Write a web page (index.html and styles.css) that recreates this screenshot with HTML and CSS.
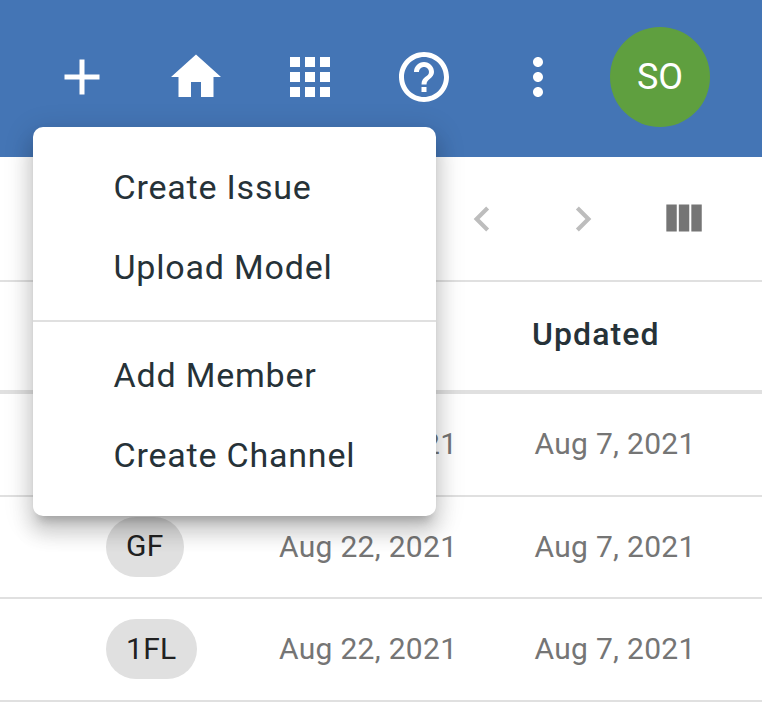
FILE: index.html
```html
<!DOCTYPE html>
<html lang="en">
<head>
<meta charset="utf-8">
<title>Issues</title>
<link rel="stylesheet" href="styles.css">
</head>
<body>
<header class="appbar">
  <button class="icon-btn"><svg class="icon" viewBox="0 0 24 24"><path d="M19 13h-6v6h-2v-6H5v-2h6V5h2v6h6v2z"/></svg></button>
  <button class="icon-btn"><svg class="icon" viewBox="0 0 24 24"><path d="M10 20v-6h4v6h5v-8h3L12 3 2 12h3v8z"/></svg></button>
  <button class="icon-btn"><svg class="icon" viewBox="0 0 24 24"><path d="M4 8h4V4H4v4zm6 12h4v-4h-4v4zm-6 0h4v-4H4v4zm0-6h4v-4H4v4zm6 0h4v-4h-4v4zm6-10v4h4V4h-4zm-6 4h4V4h-4v4zm6 6h4v-4h-4v4zm0 6h4v-4h-4v4z"/></svg></button>
  <button class="icon-btn"><svg class="icon" viewBox="0 0 24 24"><path d="M11 18h2v-2h-2v2zm1-16C6.48 2 2 6.48 2 12s4.48 10 10 10 10-4.48 10-10S17.52 2 12 2zm0 18c-4.41 0-8-3.59-8-8s3.59-8 8-8 8 3.59 8 8-3.59 8-8 8zm0-14c-2.21 0-4 1.79-4 4h2c0-1.1.9-2 2-2s2 .9 2 2c0 2-3 1.75-3 5h2c0-2.25 3-2.5 3-5 0-2.21-1.79-4-4-4z"/></svg></button>
  <button class="icon-btn"><svg class="icon" viewBox="0 0 24 24"><path d="M12 8c1.1 0 2-.9 2-2s-.9-2-2-2-2 .9-2 2 .9 2 2 2zm0 2c-1.1 0-2 .9-2 2s.9 2 2 2 2-.9 2-2-.9-2-2-2zm0 6c-1.1 0-2 .9-2 2s.9 2 2 2 2-.9 2-2-.9-2-2-2z"/></svg></button>
  <div class="avatar">SO</div>
</header>

<main>
  <div class="toolbar">
    <button class="tool-btn"><svg class="tool-icon muted" viewBox="0 0 24 24"><path d="M15.41 7.41L14 6l-6 6 6 6 1.41-1.41L10.83 12z"/></svg></button>
    <button class="tool-btn"><svg class="tool-icon muted" viewBox="0 0 24 24"><path d="M10 6L8.59 7.41 13.17 12l-4.58 4.59L10 18l6-6z"/></svg></button>
    <button class="tool-btn tool-last"><svg class="tool-icon" viewBox="0 0 24 24"><path d="M10 18h5V5h-5v13zm-6 0h5V5H4v13zM16 5v13h5V5h-5z"/></svg></button>
  </div>
  <div class="row head">
    <span></span><span></span><span class="col-updated">Updated</span>
  </div>
  <div class="row">
    <span class="chip">GF</span><span class="date">Aug 22, 2021</span><span class="date">Aug 7, 2021</span>
  </div>
  <div class="row">
    <span class="chip">GF</span><span class="date">Aug 22, 2021</span><span class="date">Aug 7, 2021</span>
  </div>
  <div class="row">
    <span class="chip">1FL</span><span class="date">Aug 22, 2021</span><span class="date">Aug 7, 2021</span>
  </div>
</main>

<nav class="menu">
  <ul class="menu-group">
    <li class="menu-item">Create Issue</li>
    <li class="menu-item">Upload Model</li>
  </ul>
  <ul class="menu-group divided">
    <li class="menu-item">Add Member</li>
    <li class="menu-item">Create Channel</li>
  </ul>
</nav>
</body>
</html>
```
FILE: styles.css
```css
* { box-sizing: border-box; }
html, body { margin: 0; height: 100%; }
body {
  position: relative;
  overflow: hidden;
  background: #fff;
  font-family: Roboto, "Liberation Sans", sans-serif;
  color: #212121;
}
button {
  border: 0;
  padding: 0;
  background: none;
  display: flex;
  align-items: center;
  justify-content: center;
}
.appbar {
  height: 157px;
  background: #4475b5;
  display: flex;
  align-items: center;
  padding: 0 52px 3px 25px;
}
.icon-btn { width: 114px; height: 100px; }
.icon { width: 60px; height: 60px; fill: #fff; display: block; }
.avatar {
  width: 100px;
  height: 100px;
  margin-left: 15px;
  border-radius: 50%;
  background: #5f9f3f;
  color: #fff;
  font-size: 36px;
  display: flex;
  align-items: center;
  justify-content: center;
}
.toolbar {
  height: 125px;
  border-bottom: 2px solid #e0e0e0;
  display: flex;
  align-items: center;
  justify-content: flex-end;
  padding: 0 30px 0 0;
}
.tool-btn { width: 101px; height: 100px; }
.tool-last { width: 99px; }
.tool-icon { width: 50px; height: 50px; fill: #757575; display: block; }
.muted { fill: #bdbdbd; }
.row {
  height: 102.6px;
  display: grid;
  grid-template-columns: 279px 255.5px 1fr;
  align-items: center;
  border-bottom: 2px solid #e0e0e0;
}
.head { height: 112px; border-bottom-width: 4px; }
.col-updated {
  font-size: 32px;
  font-weight: 500;
  letter-spacing: 1.1px;
  color: #263238;
  margin-left: -2.5px;
  padding-bottom: 4px;
}
.date { font-size: 30px; color: #757575; letter-spacing: 0.3px; padding-bottom: 1px; }
.chip {
  justify-self: start;
  margin-left: 106px;
  height: 60px;
  padding: 0 20px 2px;
  border-radius: 30px;
  background: #e0e0e0;
  font-size: 30px;
  letter-spacing: 0.3px;
  display: flex;
  align-items: center;
}
.menu {
  position: absolute;
  left: 33px;
  top: 127px;
  width: 403px;
  background: #fff;
  border-radius: 10px;
  box-shadow: 0 10px 10px -6px rgba(0,0,0,.2), 0 16px 20px 2px rgba(0,0,0,.14), 0 6px 28px 4px rgba(0,0,0,.12);
}
.menu-group { list-style: none; margin: 0; padding: 20px 0 13px; }
.divided { border-top: 2px solid #e0e0e0; padding: 13px 0 21px; }
.menu-item {
  height: 80px;
  padding-left: 80.5px;
  font-size: 34px;
  letter-spacing: 0.8px;
  line-height: 80px;
  color: #263238;
}
```
